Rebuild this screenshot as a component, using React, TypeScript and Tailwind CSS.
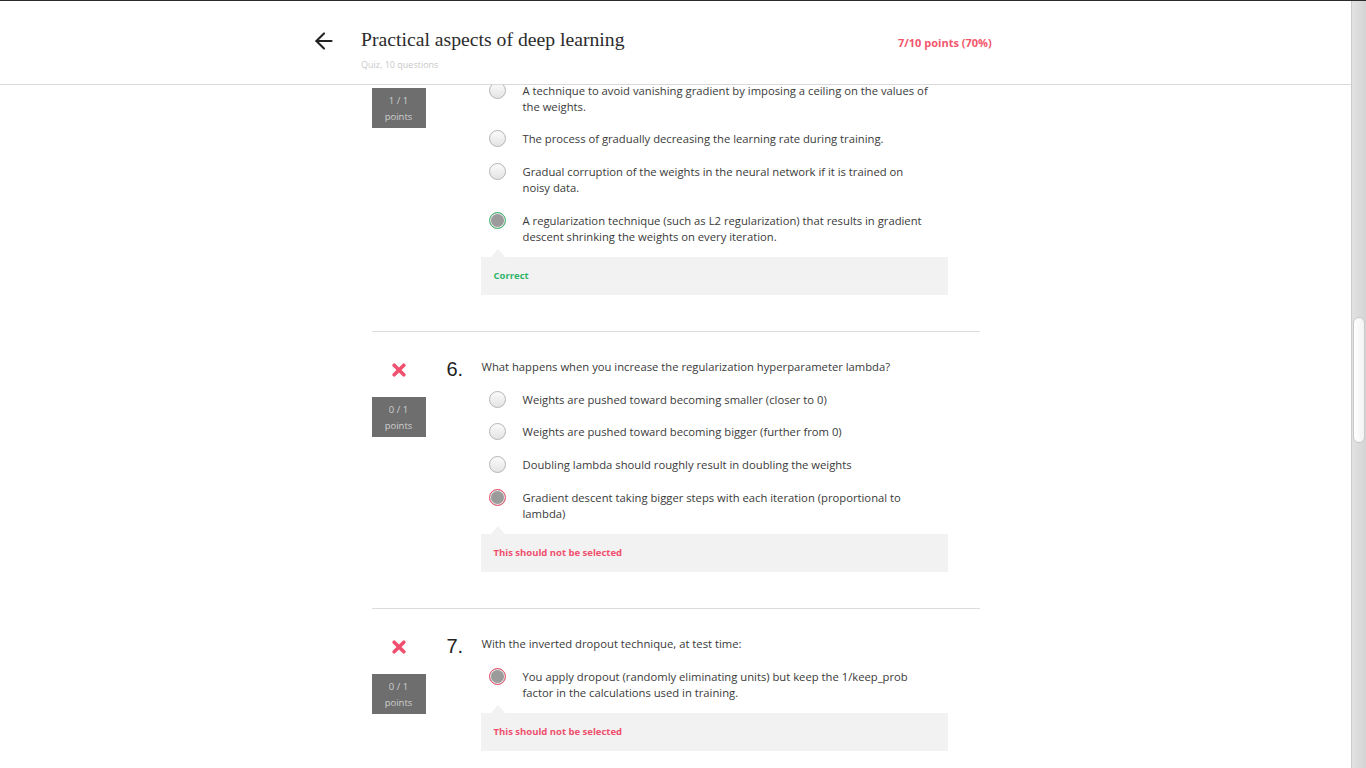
import { ArrowLeft } from 'lucide-react'

type Mark = 'none' | 'correct' | 'wrong'

type Option = { lines: string[]; mark: Mark }

type Question = {
  n?: number
  text?: string
  score: string
  wrong?: boolean
  options: Option[]
  feedback: { ok: boolean; text: string }
}

const questions: Question[] = [
  {
    score: '1 / 1',
    options: [
      {
        lines: ['A technique to avoid vanishing gradient by imposing a ceiling on the values of', 'the weights.'],
        mark: 'none',
      },
      { lines: ['The process of gradually decreasing the learning rate during training.'], mark: 'none' },
      {
        lines: ['Gradual corruption of the weights in the neural network if it is trained on', 'noisy data.'],
        mark: 'none',
      },
      {
        lines: [
          'A regularization technique (such as L2 regularization) that results in gradient',
          'descent shrinking the weights on every iteration.',
        ],
        mark: 'correct',
      },
    ],
    feedback: { ok: true, text: 'Correct' },
  },
  {
    n: 6,
    text: 'What happens when you increase the regularization hyperparameter lambda?',
    score: '0 / 1',
    wrong: true,
    options: [
      { lines: ['Weights are pushed toward becoming smaller (closer to 0)'], mark: 'none' },
      { lines: ['Weights are pushed toward becoming bigger (further from 0)'], mark: 'none' },
      { lines: ['Doubling lambda should roughly result in doubling the weights'], mark: 'none' },
      {
        lines: ['Gradient descent taking bigger steps with each iteration (proportional to', 'lambda)'],
        mark: 'wrong',
      },
    ],
    feedback: { ok: false, text: 'This should not be selected' },
  },
  {
    n: 7,
    text: 'With the inverted dropout technique, at test time:',
    score: '0 / 1',
    wrong: true,
    options: [
      {
        lines: ['You apply dropout (randomly eliminating units) but keep the 1/keep_prob', 'factor in the calculations used in training.'],
        mark: 'wrong',
      },
    ],
    feedback: { ok: false, text: 'This should not be selected' },
  },
]

const Radio = ({ mark }: { mark: Mark }) => {
  if (mark === 'correct')
    return (
      <span className="block w-[17px] h-[17px] rounded-full border-[1.5px] border-[#3dbb6d] bg-[#9b9b9b] shadow-[inset_0_0_0_1px_#e8e8e8]" />
    )
  if (mark === 'wrong')
    return (
      <span className="block w-[17px] h-[17px] rounded-full border-[1.5px] border-[#f0506e] bg-[#9b9b9b] shadow-[inset_0_0_0_1px_#e8e8e8]" />
    )
  return (
    <span className="block w-[17px] h-[17px] rounded-full border border-[#b4b4b4] bg-linear-to-b from-[#fbfbfb] to-[#e4e4e4]" />
  )
}

const WrongIcon = () => (
  <svg width="14" height="14" viewBox="0 0 14 14">
    <path d="M2.2 2.2 L11.8 11.8 M11.8 2.2 L2.2 11.8" stroke="#f0506e" strokeWidth="3.6" strokeLinecap="round" />
  </svg>
)

const Badge = ({ score, className }: { score: string; className: string }) => (
  <div className={`w-[54px] h-[40px] bg-[#6e6e6e] pt-[5px] text-center text-[9.5px] leading-4 text-[#cfcfcf] ${className}`}>
    <div>{score}</div>
    <div>points</div>
  </div>
)

const QuestionBlock = ({ q, first }: { q: Question; first?: boolean }) => {
  return (
    <section className={`flex border-b border-[#dcdcdc] pb-[36px] ${first ? '' : 'pt-[27px]'}`}>
      <div className="w-[54px] flex flex-col items-center">
        {q.wrong && (
          <div className="mt-1">
            <WrongIcon />
          </div>
        )}
        <Badge score={q.score} className={first ? 'mt-[13px]' : 'mt-5'} />
      </div>
      <div className="ml-[21px] w-[34px] text-[20px] leading-5 text-[#222] font-['Liberation_Sans',Arial,sans-serif]">
        {q.n ? `${q.n}.` : ''}
      </div>
      <div className="w-[467px]">
        {q.text && <p className="pl-px text-[11.25px] leading-4 text-[#3a3a3a] mb-[9px]">{q.text}</p>}
        <div className="flex flex-col">
          {q.options.map((o, i) => (
            <div key={i} className={`flex py-2 ${i >= 2 ? 'mt-px' : ''}`}>
              <div className="w-[42px] pl-2 h-4 flex items-center -mt-px">
                <Radio mark={o.mark} />
              </div>
              <p className="text-[11.25px] leading-4 text-[#3a3a3a] whitespace-nowrap">
                {o.lines.map((l, j) => (
                  <span key={j} className="block">
                    {l}
                  </span>
                ))}
              </p>
            </div>
          ))}
        </div>
        <div className="relative mt-1 h-[38px] bg-[#f2f2f2] flex items-center px-[13px]">
          <span className="absolute -top-[8px] left-[10px] w-0 h-0 border-x-[7px] border-x-transparent border-b-[8px] border-b-[#f2f2f2]" />
          <span className={`text-[9.5px] font-bold ${q.feedback.ok ? 'text-[#2fb56a]' : 'text-[#f0506e]'}`}>
            {q.feedback.text}
          </span>
        </div>
      </div>
    </section>
  )
}

const App = () => {
  return (
    <div className="h-screen w-full overflow-hidden flex flex-col bg-white border-t border-[#2a2a2a] font-['Open_Sans','Liberation_Sans',sans-serif]">
      <div className="flex flex-1 min-h-0">
        <main className="flex-1 flex flex-col min-w-0">
          <header className="relative z-10 h-[84px] shrink-0 bg-white border-b border-[#d9d9d9] flex pl-[311px]">
            <div className="w-[50px] pt-[27px] text-[#222]">
              <ArrowLeft size={26} strokeWidth={1.9} />
            </div>
            <div className="w-[537px] pt-[26px]">
              <h1 className="text-[19.7px] leading-6 text-[#2b2b2b] font-['Liberation_Serif',Georgia,serif]">
                Practical aspects of deep learning
              </h1>
              <p className="mt-[8px] text-[9px] leading-3 text-[#c9c9c9]">Quiz, 10 questions</p>
            </div>
            <div className="pt-[34px] text-[11px] leading-4 font-bold text-[#f2566c]">7/10 points (70%)</div>
          </header>
          <div className="-mt-[10px] mx-auto w-[608px]">
            {questions.map((q, i) => (
              <QuestionBlock key={i} q={q} first={i === 0} />
            ))}
          </div>
        </main>
        <aside className="w-[15px] shrink-0 border-l border-[#cbcbcb] bg-linear-to-r from-[#e2e2e2] to-[#d4d4d4] pt-[316px]">
          <div className="mx-[1px] h-[126px] rounded-full bg-linear-to-r from-white to-[#f3f3f3] border border-[#c9c9c9]" />
        </aside>
      </div>
    </div>
  )
}

export default App
